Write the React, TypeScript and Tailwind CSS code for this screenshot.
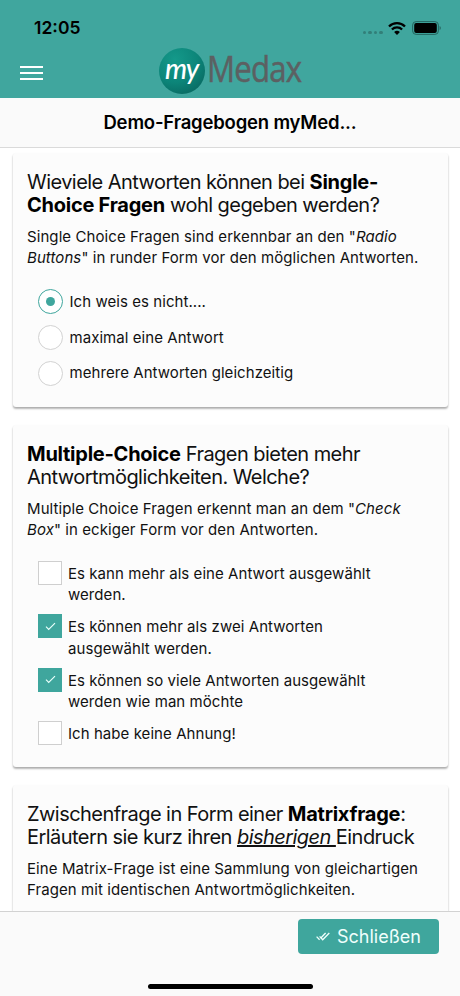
import React from "react";

const Radio = ({ label, checked }: { label: React.ReactNode; checked?: boolean }) => (
  <div className="flex h-[35.7px] items-center">
    <div
      className={
        checked
          ? "flex h-[25px] w-[25px] items-center justify-center rounded-full border border-[#3fa69d] bg-white"
          : "flex h-[25px] w-[25px] items-center justify-center rounded-full border border-[#d2d2d2] bg-white"
      }
    >
      {checked && <div className="h-[9px] w-[9px] rounded-full bg-[#3fa69d]"></div>}
    </div>
    <span className="ml-[6.5px] pt-px text-[15px] tracking-[0.06px]">{label}</span>
  </div>
);

const CheckBox = ({ label, checked }: { label: React.ReactNode; checked?: boolean }) => (
  <div className="mb-[8.9px] flex items-start">
    {checked ? (
      <div className="flex h-[24px] w-[24px] shrink-0 items-center justify-center bg-[#3fa69d]">
        <svg width="11" height="9" viewBox="0 0 12 10" fill="none" stroke="#e8fffb" strokeWidth="1.3">
          <path d="M1 5.2 4 8.2 11 1.2" />
        </svg>
      </div>
    ) : (
      <div className="h-[24px] w-[24px] shrink-0 border border-[#cfcfcf] bg-white"></div>
    )}
    <span className="ml-[6px] pt-[2px] text-[15px] leading-[21.3px] tracking-[0.06px]">{label}</span>
  </div>
);

const Card = ({ title, text, className, children }: { title: React.ReactNode; text: React.ReactNode; className: string; children?: React.ReactNode }) => (
  <div className={className + " shrink-0 rounded-[3px] bg-[#fcfcfc] px-[14px] shadow-[0_2px_2px_rgba(0,0,0,0.26),0_1px_2px_rgba(0,0,0,0.1)]"}>
    <h2 className="pt-[18px] text-[20px] leading-[23.4px] tracking-[-0.55px] [&_b]:tracking-[-0.25px] [&_b]:text-black">{title}</h2>
    <p className="mt-[8px] text-[15px] leading-[21.3px] tracking-[0.08px]">{text}</p>
    {children}
  </div>
);

const App = () => {
  return (
    <div className="flex h-[996px] w-[460px] flex-col overflow-hidden bg-white font-['Inter',sans-serif] whitespace-nowrap text-[#111]">
      <header className="h-[98px] shrink-0 bg-[#40a69e]">
        <div className="flex h-[48px] items-center pt-[8px] pr-[18px] pl-[34px]">
          <span className="text-[17.5px] font-semibold text-black">12:05</span>
          <div className="ml-auto flex items-center">
            <div className="mt-[9px] mr-[5px] flex gap-[2px]">
              {[0, 1, 2, 3].map((i) => (
                <div key={i} className="h-[3.6px] w-[3.6px] rounded-full bg-[#327f79]"></div>
              ))}
            </div>
            <svg width="18" height="13" viewBox="0 0 18 13" fill="none" stroke="#000" strokeWidth="2.3">
              <path d="M1 4.5a11.3 11.3 0 0 1 16 0" />
              <path d="M3.9 7.5a7.2 7.2 0 0 1 10.2 0" />
              <path d="M6.1 10.1a4.1 4.1 0 0 1 5.8 0L9 13z" fill="#000" stroke="none" />
            </svg>
            <svg className="ml-[6px]" width="30" height="14" viewBox="0 0 30 14">
              <rect x="0.6" y="0.6" width="25.8" height="12.8" rx="3.5" fill="none" stroke="#24645f" />
              <rect x="2.2" y="2.1" width="22.6" height="9.8" rx="2" />
              <path d="M27.6 5a2.4 2.4 0 0 1 0 4.2z" fill="#24645f" />
            </svg>
          </div>
        </div>
        <div className="flex h-[46px] items-center pl-[20px]">
          <div className="mt-[4px] flex w-[23px] flex-col gap-[4px]">
            <div className="h-[2px] bg-white"></div>
            <div className="h-[2px] bg-white"></div>
            <div className="h-[2px] bg-white"></div>
          </div>
          <div className="ml-[116px] flex items-center">
            <div className="flex h-[45.5px] w-[45.5px] items-center justify-center rounded-full bg-[radial-gradient(circle_at_35%_25%,#14998a_0%,#0c8579_50%,#075c56_100%)]">
              <span className="-mt-[7px] text-[28px] leading-none font-medium tracking-[-0.8px] text-white italic font-['Lato',sans-serif]">my</span>
            </div>
            <span className="-mt-[5px] ml-[2.5px] origin-left scale-x-[0.865] text-[36px] leading-[40px] font-medium tracking-[-0.9px] text-[#5c6062] font-['Open_Sans',sans-serif] [-webkit-text-stroke:0.5px_#5c6062]">Medax</span>
          </div>
        </div>
      </header>

      <div className="flex h-[50px] shrink-0 items-center justify-center border-b border-[#dadada] bg-[#fafafa]">
        <h1 className="text-[18.5px] font-semibold tracking-[-0.18px] text-black">Demo-Fragebogen myMed...</h1>
      </div>

      <main className="flex min-h-0 flex-1 flex-col overflow-hidden pt-[5px] pr-[12px] pl-[13px]">
        <Card
          className="h-[254px]"
          title={<>Wieviele Antworten können bei <b>Single-<br />Choice Fragen</b> wohl gegeben werden?</>}
          text={<>Single Choice Fragen sind erkennbar an den "<i>Radio<br />Buttons</i>" in runder Form vor den möglichen Antworten.</>}
        >
          <div className="mt-[15.4px] pl-[11px]">
            <Radio label="Ich weis es nicht...." checked />
            <Radio label="maximal eine Antwort" />
            <Radio label="mehrere Antworten gleichzeitig" />
          </div>
        </Card>

        <Card
          className="mt-[18px] h-[342px]"
          title={<><b>Multiple-Choice</b> Fragen bieten mehr<br />Antwortmöglichkeiten. Welche?</>}
          text={<>Multiple Choice Fragen erkennt man an dem "<i>Check<br />Box</i>" in eckiger Form vor den Antworten.</>}
        >
          <div className="mt-[20.4px] pl-[11px]">
            <CheckBox label={<>Es kann mehr als eine Antwort ausgewählt<br />werden.</>} />
            <CheckBox label={<>Es können mehr als zwei Antworten<br />ausgewählt werden.</>} checked />
            <CheckBox label={<>Es können so viele Antworten ausgewählt<br />werden wie man möchte</>} checked />
            <CheckBox label="Ich habe keine Ahnung!" />
          </div>
        </Card>

        <Card
          className="mt-[18px] h-[200px]"
          title={<>Zwischenfrage in Form einer <b>Matrixfrage</b>:<br />Erläutern sie kurz ihren <i className="underline">bisherigen </i>Eindruck</>}
          text={<>Eine Matrix-Frage ist eine Sammlung von gleichartigen<br />Fragen mit identischen Antwortmöglichkeiten.</>}
        />
      </main>

      <footer className="flex h-[85px] shrink-0 flex-col border-t border-[#d2d2d2] bg-[#fafafa]">
        <button className="mt-[7px] mr-[21px] flex h-[35px] w-[141px] items-center self-end rounded-[4px] bg-[#3fa69d] pl-[18px] text-[18px] text-[#effffc]">
          <svg width="14" height="9" viewBox="0 0 14 9" fill="none" stroke="#effffc" strokeWidth="1.3">
            <path d="M.6 4.6 3.6 7.8" />
            <path d="M4.6 6.3 9.6 1" />
            <path d="M3.6 4.4 6.7 7.8 13.3 1" />
          </svg>
          <span className="ml-[7px]">Schließen</span>
        </button>
        <div className="mt-[30px] h-[5px] w-[165px] self-center rounded-full bg-black"></div>
      </footer>
    </div>
  );
};

export default App;
